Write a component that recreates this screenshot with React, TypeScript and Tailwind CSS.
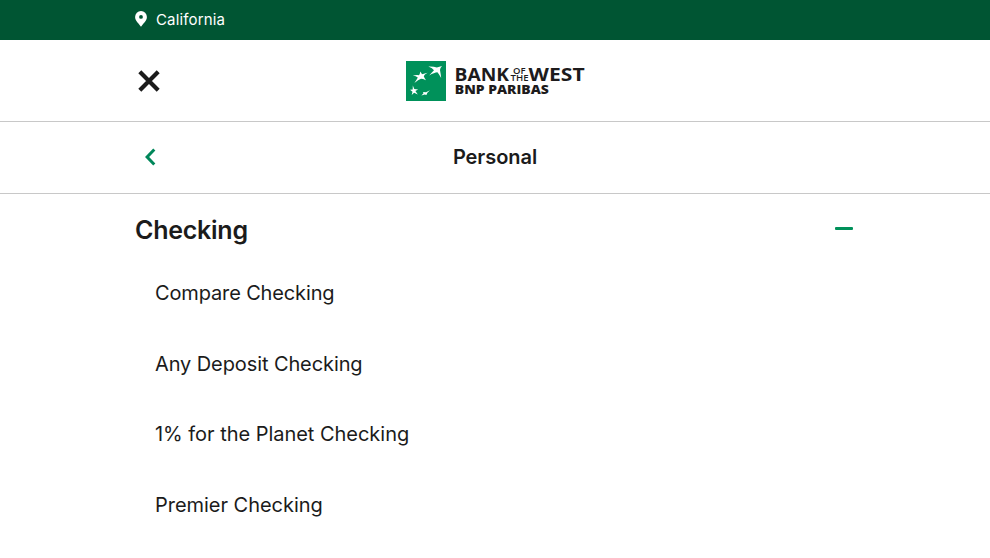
const links = [
  { label: "Compare Checking", tracking: "tracking-[-0.14px]" },
  { label: "Any Deposit Checking", tracking: "tracking-[-0.1px]" },
  { label: "1% for the Planet Checking", tracking: "tracking-[-0.03px]" },
  { label: "Premier Checking", tracking: "tracking-[-0.03px]" },
];

function Logo() {
  return (
    <svg width="180" height="40" viewBox="0 0 180 40" role="img" aria-label="Bank of the West BNP Paribas">
      <rect width="40" height="40" fill="#00915a" />
      <g fill="#fff">
        <path d="M36 5Q34 7 34 9 34.6 12.4 35.2 17 32.8 12.6 31.4 11.2 28.4 11.4 23.2 14.4 26.6 10.6 28 9.2 26.6 7.2 22.4 5.4 28 5.2 30.8 6.6Z" />
        <path d="M21.6 11.8Q18 13.6 17.8 15.2 18.4 17.2 20 19.2 16.6 17.8 15 17.8 12.4 18.6 8.4 22 11 18 11.8 16.4 10.2 15 6.8 14.4 11 13.8 13 14.2 14 12.6 14.4 10.4 15.4 12.2 16 13.2Z" />
        <path d="M6.8 24.6 8.3 28.1 12.1 28.6 9.4 30 11.8 33.6 8.1 31.7 5.7 34 6.5 30.7 4 28.8 6.7 28.6Z" />
        <path d="M24 29.3 21.4 31.8 20.4 34 18.7 33.4 15.4 34.4 17.5 32.3 17 31.1 20 31.3Z" />
      </g>
      <g fill="#1d1b1c" fontFamily="Open Sans, sans-serif" fontWeight="700">
        <text x="48.6" y="20" fontSize="18" textLength="54.5" lengthAdjust="spacingAndGlyphs">BANK</text>
        <text x="107" y="13.4" fontSize="8" fontWeight="600" textLength="12.5" lengthAdjust="spacingAndGlyphs">OF</text>
        <text x="104.6" y="20" fontSize="8" fontWeight="600" textLength="18" lengthAdjust="spacingAndGlyphs">THE</text>
        <text x="122.6" y="20" fontSize="18" textLength="56" lengthAdjust="spacingAndGlyphs">WEST</text>
        <text x="48.8" y="33" fontSize="12" fontWeight="800" textLength="94" lengthAdjust="spacingAndGlyphs">BNP PARIBAS</text>
      </g>
    </svg>
  );
}

export default function App() {
  return (
    <div className="h-[558px] overflow-hidden bg-white font-['Inter',sans-serif] text-[#1b1b1b]">
      <div className="flex h-10 items-center bg-[#005533] pl-[135px] text-white">
        <svg className="mb-[3px]" width="12" height="16" viewBox="0 0 12 16" fill="#fff">
          <path fillRule="evenodd" d="M6 0A5.9 5.9 0 0 0 .1 5.9C.1 10 4 12.4 6 15.8c2-3.4 5.9-5.8 5.9-9.9A5.9 5.9 0 0 0 6 0ZM6 4a1.9 1.9 0 1 1 0 3.8A1.9 1.9 0 0 1 6 4Z" />
        </svg>
        <span className="ml-[9px] text-[15px] leading-5 tracking-[0.15px]">California</span>
      </div>

      <header className="grid h-[82px] grid-cols-[406px_1fr] items-center border-b border-[#c8c8c8]">
        <button className="ml-[138px] w-[22px]" aria-label="Close menu">
          <svg width="22" height="22" viewBox="0 0 22 22" stroke="#1b1b1b" strokeWidth="4.2">
            <path d="M1.8 1.8 20.2 20.2M20.2 1.8 1.8 20.2" />
          </svg>
        </button>
        <Logo />
      </header>

      <div className="grid h-[72px] grid-cols-[1fr_auto_1fr] items-center border-b border-[#c8c8c8] pb-0.5">
        <button className="ml-[145px] w-[11px]" aria-label="Back">
          <svg width="11" height="18" viewBox="0 0 11 18" fill="none" stroke="#00875a" strokeWidth="3">
            <path d="M9.3 1.5 2.1 9l7.2 7.5" />
          </svg>
        </button>
        <h1 className="text-xl font-semibold leading-7 tracking-[-0.05px]">Personal</h1>
      </div>

      <main className="pl-[135px] pr-[137px]">
        <div className="flex h-[69px] items-center justify-between">
          <h2 className="pt-[3px] text-[25px] font-semibold leading-8 tracking-[-0.25px]">Checking</h2>
          <span className="h-[3px] w-[18px] rounded-[1px] bg-[#00915a]" />
        </div>
        <ul className="-mt-[5px] ml-5">
          {links.map(({ label, tracking }) => (
            <li key={label} className={"flex h-[70.6px] items-center whitespace-nowrap text-xl " + tracking}>
              {label}
            </li>
          ))}
        </ul>
      </main>
    </div>
  );
}
